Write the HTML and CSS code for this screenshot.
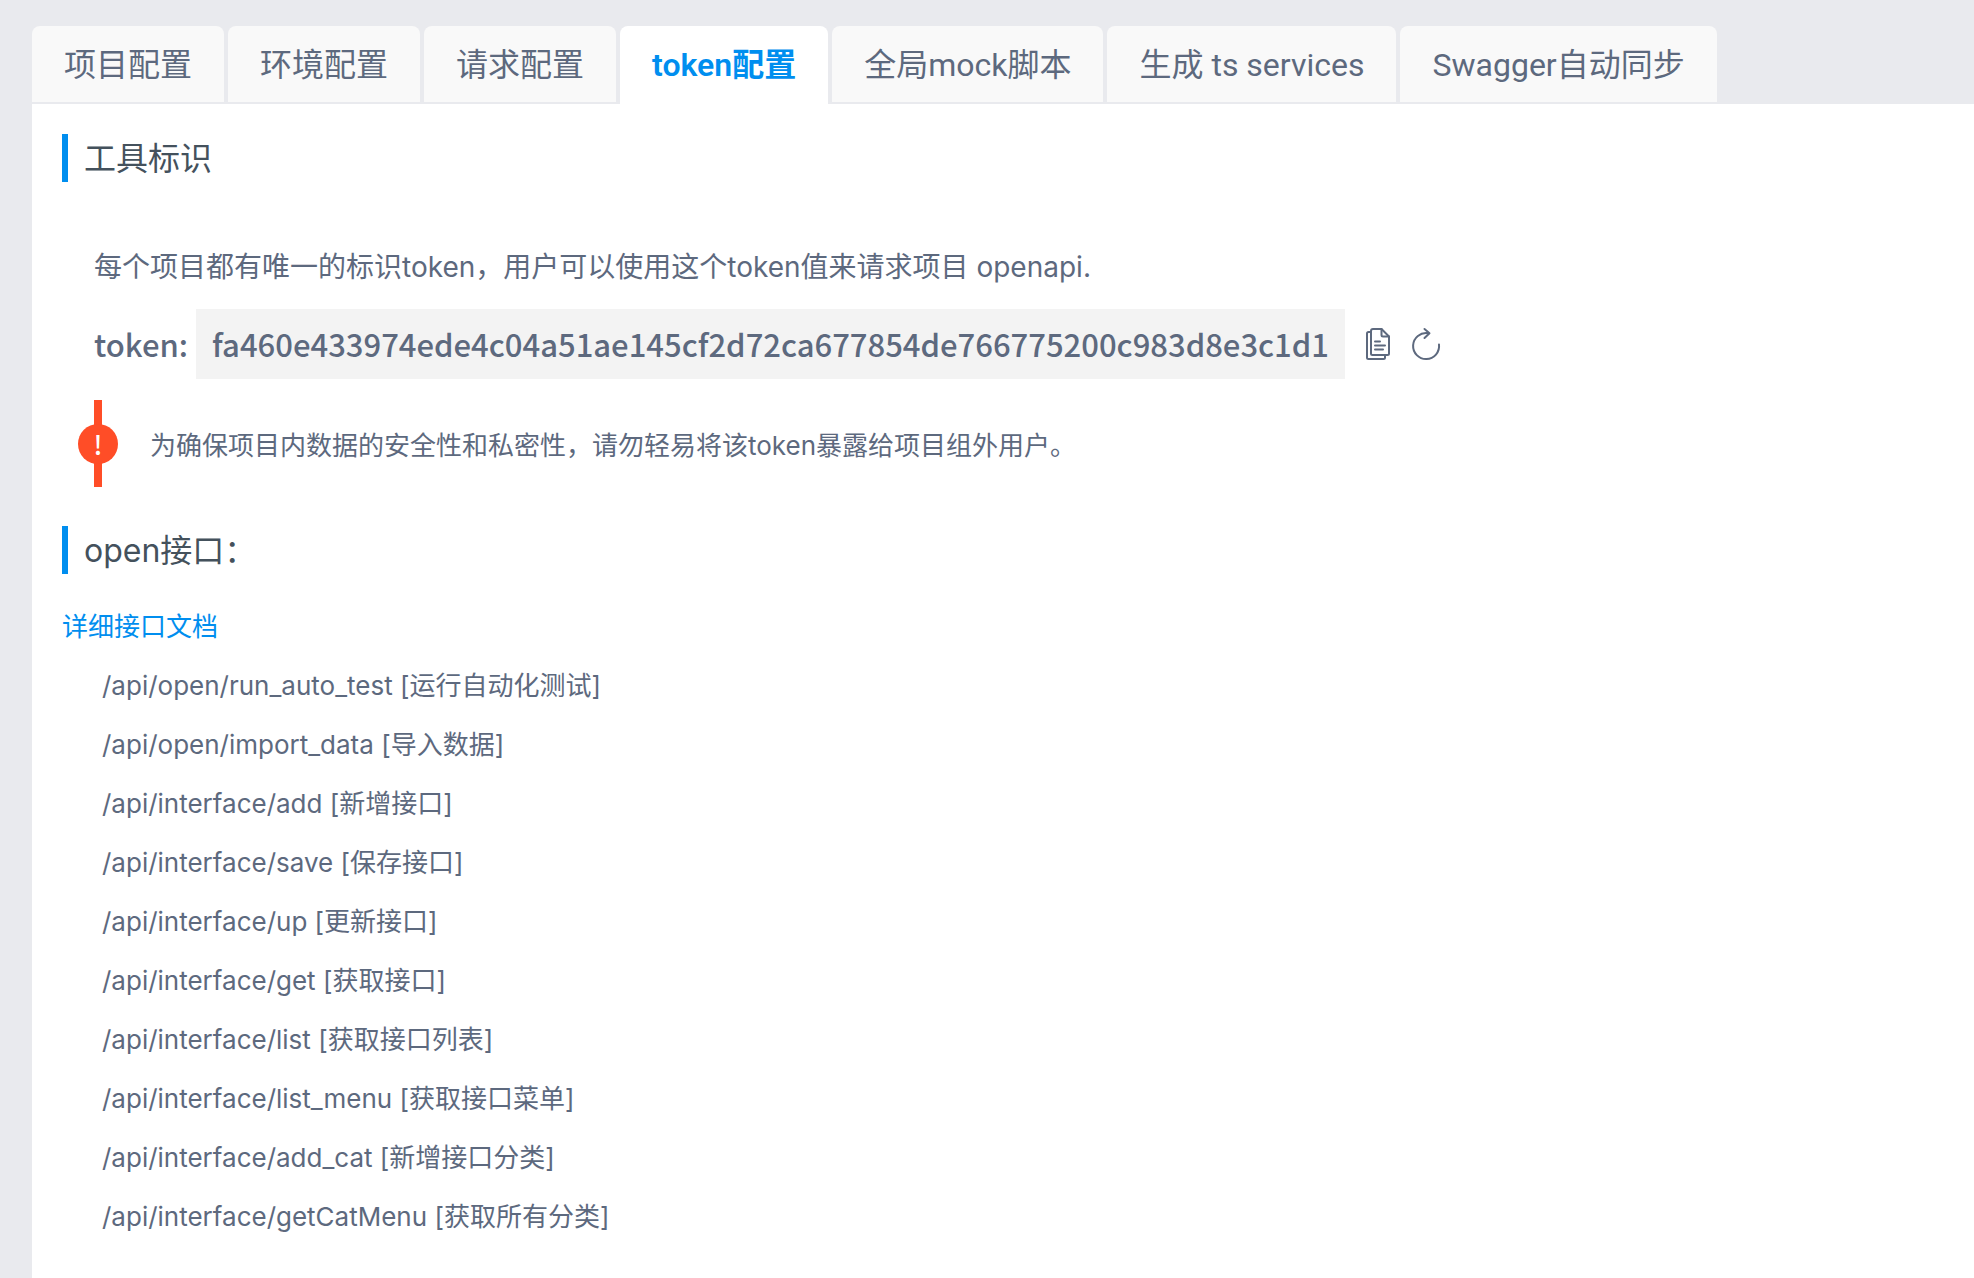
FILE: index.html
```html
<!DOCTYPE html>
<html lang="zh-CN">
<head>
    <meta charset="UTF-8">
    <meta name="viewport" content="width=device-width, initial-scale=1.0">
    <title>token配置</title>
    <link rel="stylesheet" href="styles.css">
</head>
<body>

    <nav class="tabs" role="tablist">
        <button class="tab" role="tab">项目配置</button>
        <button class="tab" role="tab">环境配置</button>
        <button class="tab" role="tab">请求配置</button>
        <button class="tab active" role="tab" aria-selected="true">token配置</button>
        <button class="tab" role="tab">全局mock脚本</button>
        <button class="tab" role="tab">生成 ts services</button>
        <button class="tab" role="tab">Swagger自动同步</button>
    </nav>

    <main class="panel">
        <h2 class="title">工具标识</h2>

        <div class="token">
            <p class="desc">每个项目都有唯一的标识token，用户可以使用这个token值来请求项目 openapi.</p>
            <div class="token-row">
                <span class="token-label">token:</span>
                <code class="token-value">fa460e433974ede4c04a51ae145cf2d72ca677854de766775200c983d8e3c1d1</code>
                <button class="icon-btn" aria-label="复制">
                    <svg class="icon-copy" viewBox="0 0 26 34">
                        <path d="M6 5H3.5Q2 5 2 6.500V30.500Q2 32 3.500 32H18.500Q20 32 20 30.500V28.500"/>
                        <path d="M16.500 2H8Q6 2 6 4V26.500Q6 28 7.500 28H22.500Q24 28 24 26.500V9.500Z"/>
                        <path d="M16.500 2V8Q16.500 9.500 18 9.500H24M10 14.500H15M10 18.500H20M10 22.500H18"/>
                    </svg>
                </button>
                <button class="icon-btn" aria-label="刷新">
                    <svg class="icon-reload" viewBox="0 0 30 34">
                        <path d="M28 17.500A13 13 0 1 1 17 6.200M13.500 2L18.500 6.200L13.500 11"/>
                    </svg>
                </button>
            </div>
        </div>

        <div class="notice">
            <span class="notice-mark"><span class="notice-dot">!</span></span>
            <p>为确保项目内数据的安全性和私密性，请勿轻易将该token暴露给项目组外用户。</p>
        </div>

        <h2 class="title">open接口：</h2>

        <div class="open-api">
            <a href="#doc">详细接口文档</a>
            <ul>
                <li>/api/open/run_auto_test [运行自动化测试]</li>
                <li>/api/open/import_data [导入数据]</li>
                <li>/api/interface/add [新增接口]</li>
                <li>/api/interface/save [保存接口]</li>
                <li>/api/interface/up [更新接口]</li>
                <li>/api/interface/get [获取接口]</li>
                <li>/api/interface/list [获取接口列表]</li>
                <li>/api/interface/list_menu [获取接口菜单]</li>
                <li>/api/interface/add_cat [新增接口分类]</li>
                <li>/api/interface/getCatMenu [获取所有分类]</li>
            </ul>
        </div>
    </main>

</body>
</html>
```
FILE: styles.css
```css
:root {
    --bg-color: #e9eaee;
    --tab-bg: #f9f9f9;
    --text-color: #5d697e;
    --title-color: #44515c;
    --main-color: #008eef;
    --warn-color: #ff4d27;
}

* {
    box-sizing: border-box;
}

body {
    display: flex;
    flex-direction: column;
    min-height: 100vh;
    margin: 0;
    padding: 26px 0 0 32px;
    background-color: var(--bg-color);
    color: var(--text-color);
    font-family: Inter, "Noto Sans CJK SC", sans-serif;
    font-size: 26px;
}

h2, p, ul {
    margin: 0;
    padding: 0;
    font-weight: normal;
}

button {
    border: none;
    background: none;
    color: inherit;
    font-family: inherit;
    cursor: pointer;
}

/* tabs */
.tabs {
    display: flex;
    gap: 4px;
    font-family: Roboto, "Noto Sans CJK SC", sans-serif;
}

.tab {
    height: 78px;
    padding: 0 32px 4px;
    border-bottom: 2px solid var(--bg-color);
    border-radius: 8px 8px 0 0;
    background-color: var(--tab-bg);
    font-size: 32px;
    white-space: nowrap;
}

.tab.active {
    border-bottom-color: #fff;
    background-color: #fff;
    color: var(--main-color);
    font-weight: 600;
}

.panel {
    flex: 1;
    padding: 30px;
    background-color: #fff;
}

.title {
    margin-bottom: 23px;
    padding: 2px 0 0 16px;
    border-left: 6px solid var(--main-color);
    color: var(--title-color);
    font-size: 32px;
    line-height: 46px;
}

/* token */
.token {
    padding: 40px 32px 0;
}

.desc {
    margin-bottom: 20px;
    font-size: 28px;
    line-height: 44px;
}

.token-row {
    display: flex;
    align-items: center;
    font-family: "Noto Sans CJK SC", sans-serif;
    font-size: 31px;
    font-weight: 500;
    line-height: 70px;
}

.token-label {
    margin-right: 8px;
}

.token-value {
    margin-right: 20px;
    padding: 0 16px;
    background-color: #f3f3f3;
    font-family: inherit;
}

.icon-btn {
    display: flex;
    margin-right: 20px;
    padding: 0;
}

.icon-btn svg {
    height: 34px;
    fill: none;
    stroke: currentColor;
    stroke-width: 2;
    stroke-linecap: round;
    stroke-linejoin: round;
}

.icon-copy {
    width: 26px;
}

.icon-reload {
    width: 30px;
}

/* notice */
.notice {
    display: flex;
    align-items: center;
    gap: 32px;
    margin: 21px 16px 39px;
}

.notice-mark {
    display: flex;
    align-items: center;
    width: 40px;
    height: 87px;
    background: linear-gradient(var(--warn-color), var(--warn-color)) center / 8px 100% no-repeat;
}

.notice-dot {
    width: 40px;
    border-radius: 50%;
    background-color: var(--warn-color);
    color: #fff;
    font-family: "Noto Sans CJK SC", sans-serif;
    font-weight: 500;
    line-height: 40px;
    text-align: center;
}

/* open api */
.open-api {
    line-height: 59px;
}

.open-api a {
    color: var(--main-color);
    text-decoration: none;
}

.open-api ul {
    padding-left: 40px;
    list-style: none;
}
```
